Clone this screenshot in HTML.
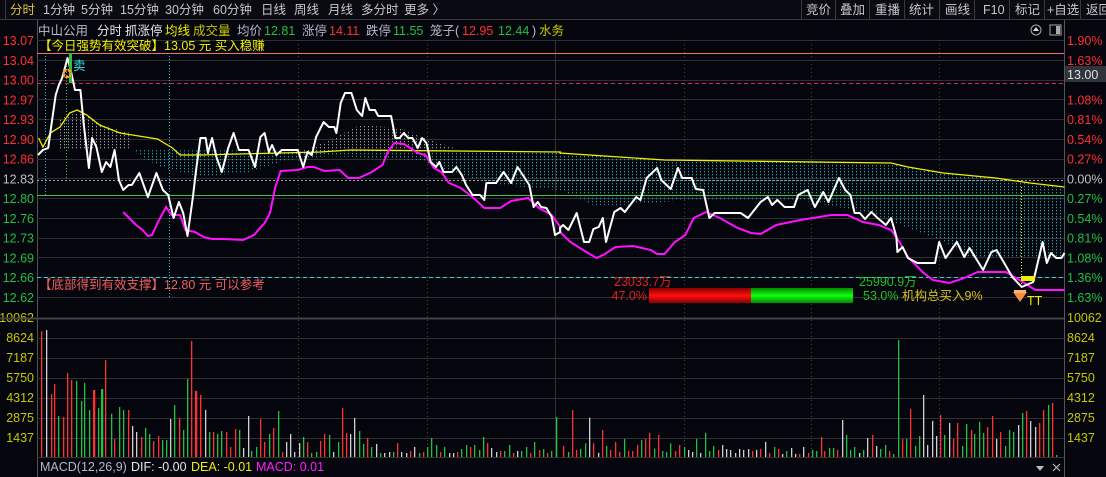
<!DOCTYPE html>
<html><head><meta charset="utf-8">
<style>
body{margin:0;width:1106px;height:477px;background:#05050d;overflow:hidden;font-family:"Liberation Sans","Noto Sans CJK SC",sans-serif;}
svg{position:absolute;left:0;top:0}
text{font-family:"Liberation Sans","Noto Sans CJK SC",sans-serif;font-size:12.5px}
</style></head><body>
<svg id="s" width="1106" height="477" viewBox="0 0 1106 477">
<defs>
<pattern id="tp" width="4" height="3" patternUnits="userSpaceOnUse"><rect x="0" y="0" width="1" height="1.3" fill="#1fa3a8"/></pattern>
<pattern id="gp" width="4" height="3" patternUnits="userSpaceOnUse"><rect x="0" y="0" width="1" height="1.3" fill="#9a9a9a"/></pattern>
<linearGradient id="rg" x1="0" y1="0" x2="0" y2="1"><stop offset="0" stop-color="#8a0000"/><stop offset="0.5" stop-color="#ff1010"/><stop offset="1" stop-color="#8a0000"/></linearGradient>
<linearGradient id="gg" x1="0" y1="0" x2="0" y2="1"><stop offset="0" stop-color="#008a00"/><stop offset="0.5" stop-color="#10ff10"/><stop offset="1" stop-color="#008a00"/></linearGradient>
</defs>
<rect x="0" y="0" width="1106" height="19" fill="#0a0a12"/>
<line x1="0" y1="19.5" x2="1106" y2="19.5" stroke="#3a3a3a"/>
<line x1="5.5" y1="0" x2="5.5" y2="19" stroke="#3a3a3a"/>
<g fill="#c8c8c8">
<text x="10" y="14" fill="#e0c040">分时</text>
<text x="43" y="14">1分钟</text><text x="81" y="14">5分钟</text><text x="120" y="14">15分钟</text>
<text x="165" y="14">30分钟</text><text x="213" y="14">60分钟</text><text x="261" y="14">日线</text>
<text x="294" y="14">周线</text><text x="328" y="14">月线</text><text x="361" y="14">多分时</text><text x="404" y="14">更多 〉</text>
<text x="806" y="14">竞价</text><text x="840" y="14">叠加</text><text x="875" y="14">重播</text><text x="909" y="14">统计</text>
<text x="945" y="14">画线</text><text x="983" y="14">F10</text><text x="1015" y="14">标记</text><text x="1047" y="14">+自选</text><text x="1086" y="14">返回</text>
</g>
<g stroke="#3a3a3a"><line x1="801.5" y1="0" x2="801.5" y2="19"/><line x1="835.5" y1="0" x2="835.5" y2="19"/><line x1="869.5" y1="0" x2="869.5" y2="19"/><line x1="904.5" y1="0" x2="904.5" y2="19"/><line x1="939.5" y1="0" x2="939.5" y2="19"/><line x1="974.5" y1="0" x2="974.5" y2="19"/><line x1="1009.5" y1="0" x2="1009.5" y2="19"/><line x1="1044.5" y1="0" x2="1044.5" y2="19"/><line x1="1080.5" y1="0" x2="1080.5" y2="19"/></g>
<text x="38" y="35" fill="#b8b8c8">中山公用</text>
<text x="97" y="35" fill="#e8e8e8">分时</text><text x="125" y="35" fill="#e8e8e8">抓涨停</text>
<text x="165" y="35" fill="#f0f000">均线</text><text x="193" y="35" fill="#c8c800">成交量</text>
<text x="237" y="35" fill="#b8b8c8">均价</text><text x="264" y="35" fill="#20c040">12.81</text>
<text x="302" y="35" fill="#b8b8c8">涨停</text><text x="329" y="35" fill="#ff3030">14.11</text>
<text x="366" y="35" fill="#b8b8c8">跌停</text><text x="393" y="35" fill="#20c040">11.55</text>
<text x="430" y="35" fill="#b8b8c8">笼子(</text><text x="462" y="35" fill="#ff3030">12.95</text><text x="498" y="35" fill="#20c040">12.44</text><text x="532" y="35" fill="#b8b8c8">)</text><text x="539" y="35" fill="#c8c800">水务</text>
<circle cx="1036" cy="30" r="5" fill="none" stroke="#aaa"/><path d="M1033 31 L1036 27 L1039 31 Z" fill="#ddd"/>
<rect x="1050" y="25" width="11" height="10" fill="none" stroke="#aaa"/><rect x="1056" y="26" width="4" height="8" fill="#aaa"/>
<line x1="37.5" y1="20" x2="37.5" y2="477" stroke="#555"/>
<line x1="1064.5" y1="20" x2="1064.5" y2="477" stroke="#555"/>
<g id="grid" stroke="#303030" stroke-width="1"></g>
<polygon fill="url(#gp)" points="60,118 80,112 100,124 130,133 130,150 60,150"/>
<polygon fill="url(#gp)" points="300,152 330,140 360,125 400,128 430,140 460,150 300,153"/>
<polygon id="tpoly" fill="url(#tp)" points=""/>
<line x1="37" y1="53.5" x2="1064" y2="53.5" stroke="#f07070"/>
<line x1="37" y1="83.5" x2="1064" y2="83.5" stroke="#e0206a" stroke-dasharray="4,3"/>
<line x1="37" y1="180.5" x2="1064" y2="180.5" stroke="#a0a0a0" stroke-dasharray="2,2"/>
<line x1="37" y1="195.5" x2="1064" y2="195.5" stroke="#40c040"/>
<line x1="37" y1="277.5" x2="1064" y2="277.5" stroke="#30d0e0" stroke-dasharray="4,3"/>
<line x1="45.5" y1="53" x2="45.5" y2="195" stroke="#30c0d0" stroke-dasharray="1,2"/>
<line x1="169.5" y1="53" x2="169.5" y2="297" stroke="#30c0d0" stroke-dasharray="1,2"/>
<line x1="66.5" y1="63" x2="66.5" y2="180" stroke="#40c040" stroke-dasharray="1,2"/>
<line x1="1021.5" y1="187" x2="1021.5" y2="285" stroke="#f0f000" stroke-dasharray="1,2"/>
<polyline id="yl" fill="none" stroke="#f0f000" stroke-width="1.3" points=""/>
<polyline id="ml" fill="none" stroke="#ff10ff" stroke-width="2" points=""/>
<polyline id="wl" fill="none" stroke="#ffffff" stroke-width="2" stroke-linejoin="round" points=""/>
<rect x="69" y="53" width="3" height="30" fill="#30c040"/>
<text x="62" y="78" fill="#ff9a30" font-size="14">✪</text>
<text x="73" y="70" fill="#30e0e0" font-size="11">卖</text>
<rect x="1021" y="276" width="14" height="5" fill="#f0f000"/>
<path d="M1013 292 L1027 292 L1020 302 Z" fill="#f09040"/><rect x="1014" y="290" width="12" height="3" fill="#ffb070"/>
<text x="1027" y="305" fill="#f0f000" font-size="7">TT</text>
<text x="39" y="50" fill="#f0f000">【今日强势有效突破】13.05 元 买入稳赚</text>
<text x="39" y="289" fill="#f06060">【底部得到有效支撑】12.80 元 可以参考</text>
<rect x="649" y="288" width="102" height="15" fill="url(#rg)"/>
<rect x="751" y="288" width="102" height="15" fill="url(#gg)"/>
<text x="614" y="286" fill="#e02020">23033.7万</text>
<text x="647" y="300" fill="#e02020" text-anchor="end">47.0%</text>
<text x="859" y="286" fill="#20c020">25990.9万</text>
<text x="863" y="300" fill="#20c020">53.0%</text><text x="902" y="300" fill="#d8c020">机构总买入9%</text>
<g id="lab"></g>
<rect x="1065" y="66" width="41" height="16" fill="#30343c"/>
<text x="1067" y="79" fill="#e0e0e0">13.00</text>
<line x1="0" y1="318.5" x2="1064" y2="318.5" stroke="#444" stroke-width="2"/>
<g id="vb"></g>
<line x1="37" y1="457.5" x2="1064" y2="457.5" stroke="#333"/>
<text x="40" y="471" fill="#b8b8c8">MACD(12,26,9)</text>
<text x="131" y="471" fill="#e8e8e8">DIF: -0.00</text>
<text x="191" y="471" fill="#f0f000">DEA: -0.01</text>
<text x="256" y="471" fill="#ff20ff">MACD: 0.01</text>
<path d="M1036 466 L1044 466 L1040 471 Z" fill="#bbb"/>
<path d="M1053 464 L1060 471 M1060 464 L1053 471" stroke="#bbb" stroke-width="1.2"/>
</svg>
<script>
var NS="http://www.w3.org/2000/svg";
function el(t,a,p,txt){var e=document.createElementNS(NS,t);for(var k in a)e.setAttribute(k,a[k]);if(txt)e.textContent=txt;document.getElementById(p).appendChild(e);return e;}
var f4=function(x){return x*1.0714},f5=function(x){return 560+(x-560)*1.0446};
var rows=[];for(var i=0;i<14;i++)rows.push(40+i*19.77);
rows.forEach(function(y){el("line",{x1:37,x2:1064,y1:Math.round(y)+.5,y2:Math.round(y)+.5},"grid");});
[338,358,378,398,418,438].forEach(function(y){el("line",{x1:37,x2:1064,y1:y+.5,y2:y+.5},"grid");});
[298,427,684,811,939].forEach(function(x){el("line",{x1:x+.5,x2:x+.5,y1:40,y2:457,"stroke-dasharray":"1,3",stroke:"#444"},"grid");});
el("line",{x1:555.5,x2:555.5,y1:40,y2:457,stroke:"#333"},"grid");
var pl=["13.07","13.04","13.00","12.97","12.93","12.90","12.86","12.83","12.80","12.76","12.73","12.69","12.66","12.62"];
var pr=["1.90%","1.63%","","1.08%","0.81%","0.54%","0.27%","0.00%","0.27%","0.54%","0.81%","1.08%","1.36%","1.63%"];
for(var i=0;i<14;i++){var c=i<7?"#ff3030":(i==7?"#c0c0c0":"#20c040");var y=rows[i]+5;
el("text",{x:34,y:y,fill:c,"text-anchor":"end"},"lab",pl[i]);
if(pr[i])el("text",{x:1067,y:y,fill:c},"lab",pr[i]);}
var vl=["10062","8624","7187","5750","4312","2875","1437"];
for(var i=0;i<7;i++){el("text",{x:34,y:322+i*20,fill:"#c8c800","text-anchor":"end"},"lab",vl[i]);el("text",{x:1067,y:322+i*20,fill:"#c8c800"},"lab",vl[i]);}
function pts(a4,a5,pre){var o=pre?pre.slice():[];for(var i=0;i<a4.length;i+=2)o.push(f4(a4[i]).toFixed(1)+","+a4[i+1]);for(var i=0;i<a5.length;i+=2)o.push(f5(a5[i]).toFixed(1)+","+a5[i+1]);return o;}
var w4=[40,150,45,148,48,125,52,95,55,85,58,78,61,66,63,58,66,70,70,90,75,90,78,123,83,168,86,138,90,147,95,172,99,162,103,167,107,150,111,180,115,190,120,185,123,185,130,173,138,197,146,173,152,190,157,195,162,218,167,202,171,213,175,236,180,197,183,170,187,138,192,138,194,153,198,138,202,157,207,172,213,148,218,133,223,150,232,150,238,167,243,137,247,133,251,152,254,145,258,155,263,150,278,150,283,167,287,152,291,155,295,137,302,122,307,127,312,127,314,133,318,103,322,93,328,93,333,110,338,116,341,98,345,110,350,110,353,116,365,116,369,138,373,138,377,133,381,138,385,138,390,148,394,138,398,143,402,162,407,167,410,162,414,172,422,172,426,167,431,175,435,185,441,195,448,195,452,200,454,183,463,183,470,172,477,183,483,167,488,175,494,185,498,207,502,202,505,207,510,208,515,217,518,235,523,232];
var w5=[560,228,563,225,568,230,576,213,583,242,588,242,592,229,597,227,601,218,604,242,612,212,618,208,622,212,633,197,637,200,643,178,653,168,657,180,666,189,673,168,677,178,686,178,690,189,697,190,703,218,708,213,733,213,740,218,752,202,759,197,763,205,768,200,775,207,784,207,788,195,797,190,804,207,812,192,817,202,827,178,833,190,838,195,842,213,847,213,852,219,858,212,864,218,872,225,877,218,882,237,883,252,888,247,893,258,902,263,919,263,923,242,929,258,940,242,947,257,952,248,965,270,973,252,978,250,988,268,993,277,1002,287,1013,282,1022,242,1026,263,1030,253,1035,258,1040,258,1043,253];
document.getElementById("wl").setAttribute("points",pts(w4,w5,["38,155"]).join(" "));
var m4=[115,212,127,225,133,230,138,236,142,235,147,223,155,207,160,215,168,215,173,230,182,232,190,237,198,239,208,239,227,240,237,235,247,223,252,213,257,187,262,171,278,170,287,167,293,167,303,171,317,170,325,178,335,178,347,172,357,165,362,152,368,143,377,144,390,153,397,155,405,168,412,172,419,183,430,188,442,198,452,208,467,208,477,201,493,198,503,208,515,215,523,227];
var m5=[560,232,570,242,582,250,595,258,603,254,613,247,630,246,647,250,653,254,660,254,670,242,680,235,688,218,700,212,713,218,730,228,743,233,752,234,767,225,790,220,820,215,835,215,850,222,865,225,877,230,885,242,893,257,907,272,917,280,933,283,947,278,960,272,987,272,1003,282,1015,290,1043,290];
document.getElementById("ml").setAttribute("points",pts(m4,m5).join(" "));
var y4=[36,138,40,147,47,133,56,127,65,113,72,110,81,115,93,125,112,133,147,139,161,148,168,155,187,155,261,153,299,152,327,150,523,152];
var y5=[560,153,660,160,877,163,893,167,927,173,977,178,1010,183,1043,187];
document.getElementById("yl").setAttribute("points",pts(y4,y5).join(" "));
var ty=pts([127,150,523,152],y5);
var bot=[[1064,257],[1040,257],[970,257],[940,240],[870,213],[800,200],[690,200],[620,205],[593,205],[560,190],[500,185],[460,175],[420,160],[330,156],[286,160],[250,172],[200,177],[160,167],[136,153]];
document.getElementById("tpoly").setAttribute("points",ty.concat(bot.map(function(p){return p[0]+","+p[1]})).join(" "));
var C={r:"#ff3030",g:"#20c040",w:"#d0d0d0"};
var v3=[[142,"r",42],[163,"g",108],[177,"r",111],[226,"g",63],[248,"g",90],[262,"r",30],[274,"g",84],[285,"g",27],[310,"g",101],[320,"r",177],[332,"g",81],[345,"g",90],[357,"r",90],[369,"w",138],[381,"w",156],[394,"r",171],[405,"g",144],[417,"g",162],[429,"r",183],[442,"r",168],[454,"g",180],[465,"g",180],[477,"w",117],[488,"g",75],[500,"r",114],[511,"g",150],[548,"r",33],[561,"r",45],[573,"w",90],[585,"g",156],[596,"r",156],[608,"g",162],[620,"g",153],[633,"r",156],[645,"r",201],[657,"r",147],[669,"g",150],[680,"w",204],[693,"w",108],[704,"g",213],[716,"g",201],[729,"r",117],[740,"r",186],[752,"g",162],[764,"r",144],[777,"g",93],[789,"r",216],[800,"w",186],[812,"w",162],[824,"w",216],[836,"w",189],[848,"g",171],[860,"r",186],[872,"g",219],[884,"g",216],[896,"r",183],[908,"r",162],[920,"g",165],[932,"w",216],[945,"g",186],[957,"r",84],[969,"r",159],[979,"w",162],[991,"w",114],[1004,"g",153],[1016,"g",192],[1028,"r",174],[1040,"g",201],[1052,"w",192],[1064,"g",219],[1076,"w",219],[1088,"w",216],[1100,"g",216],[1112,"r",189],[1124,"w",216],[1136,"w",219],[1148,"r",213],[1160,"w",201],[1172,"g",219],[1184,"r",216],[1196,"g",201],[1208,"g",174],[1220,"g",195],[1232,"r",216],[1244,"g",201],[1256,"w",219],[1268,"w",219],[1280,"r",216],[1292,"g",207],[1304,"g",195],[1316,"r",201],[1328,"g",195],[1340,"g",210],[1352,"g",171],[1364,"r",189],[1376,"w",204],[1388,"w",216],[1400,"r",213],[1412,"g",213],[1424,"g",195],[1436,"r",219],[1448,"w",213],[1460,"g",213],[1472,"g",201],[1484,"r",219],[1496,"g",186],[1508,"r",210],[1520,"g",207],[1532,"r",219],[1544,"g",213],[1556,"g",111]];
var bars=[];
v3.forEach(function(b){bars.push([b[0]/2.8,b[1],380+b[2]/3]);});
[[41,"r",331],[46,"w",330],[54,"r",384],[67,"r",373],[71,"r",380],[76,"g",381],[84,"g",383],[93,"r",390],[101,"g",389],[105,"r",360],[187,"g",379],[191,"r",341],[195,"r",391],[200,"r",395]].forEach(function(b){bars.push(b);});
var v6=[[65,"r",438],[78,"g",456],[90,"r",330],[101,"r",450],[112,"g",447],[125,"g",430],[137,"w",353],[148,"r",430],[161,"w",458],[172,"r",390],[184,"g",438],[195,"r",450],[208,"r",426],[220,"r",456],[232,"g",417],[244,"r",453],[256,"r",453],[268,"r",435],[279,"g",420],[291,"r",417],[303,"r",399],[315,"g",446],[326,"r",405],[339,"g",453],[350,"g",456],[361,"g",430],[374,"r",453],[386,"r",435],[398,"g",441],[409,"w",450],[421,"w",456],[433,"g",417],[444,"w",459],[457,"g",399],[469,"g",453],[480,"g",438],[492,"r",450],[505,"w",435],[516,"w",447],[527,"w",450],[540,"w",459],[551,"w",447],[563,"w",450],[575,"w",447],[587,"r",453],[598,"w",450],[610,"r",447],[622,"w",426],[635,"r",459],[647,"g",441],[658,"r",447],[670,"w",462],[682,"g",453],[694,"w",444],[706,"w",462],[718,"r",462],[729,"w",441],[741,"r",459],[753,"g",450],[765,"g",453],[777,"r",411],[788,"r",453],[801,"g",444],[812,"g",444],[824,"r",450],[836,"w",360],[848,"g",405],[860,"g",450],[871,"g",441],[884,"w",459],[895,"g",450],[907,"w",414],[919,"r",405],[931,"w",438],[943,"g",447],[955,"g",435],[968,"r",453],[979,"g",462],[991,"g",120],[1002,"r",417],[1014,"g",417],[1026,"r",327],[1038,"g",438],[1050,"g",408],[1062,"w",285],[1073,"w",435],[1085,"w",363],[1097,"w",408],[1109,"r",345],[1120,"g",405],[1132,"w",369],[1144,"r",417],[1156,"r",369],[1168,"g",438],[1181,"g",372],[1193,"r",390],[1203,"g",402],[1215,"g",366],[1228,"g",399],[1239,"r",381],[1251,"r",348],[1263,"w",417],[1275,"r",396],[1287,"g",438],[1298,"g",390],[1311,"g",396],[1323,"w",375],[1334,"g",339],[1346,"r",333],[1358,"w",363],[1370,"w",381],[1382,"r",369],[1394,"r",330],[1406,"g",315],[1418,"r",309],[1428,"g",465]];
v6.forEach(function(b){bars.push([540+b[0]/2.77,b[1],300+b[2]/3]);});
bars.forEach(function(b){var x=Math.round(b[0]);el("rect",{x:x,y:b[2].toFixed(1),width:1.3,height:(457-b[2]).toFixed(1),fill:C[b[1]]},"vb");});
</script>
</body></html>
